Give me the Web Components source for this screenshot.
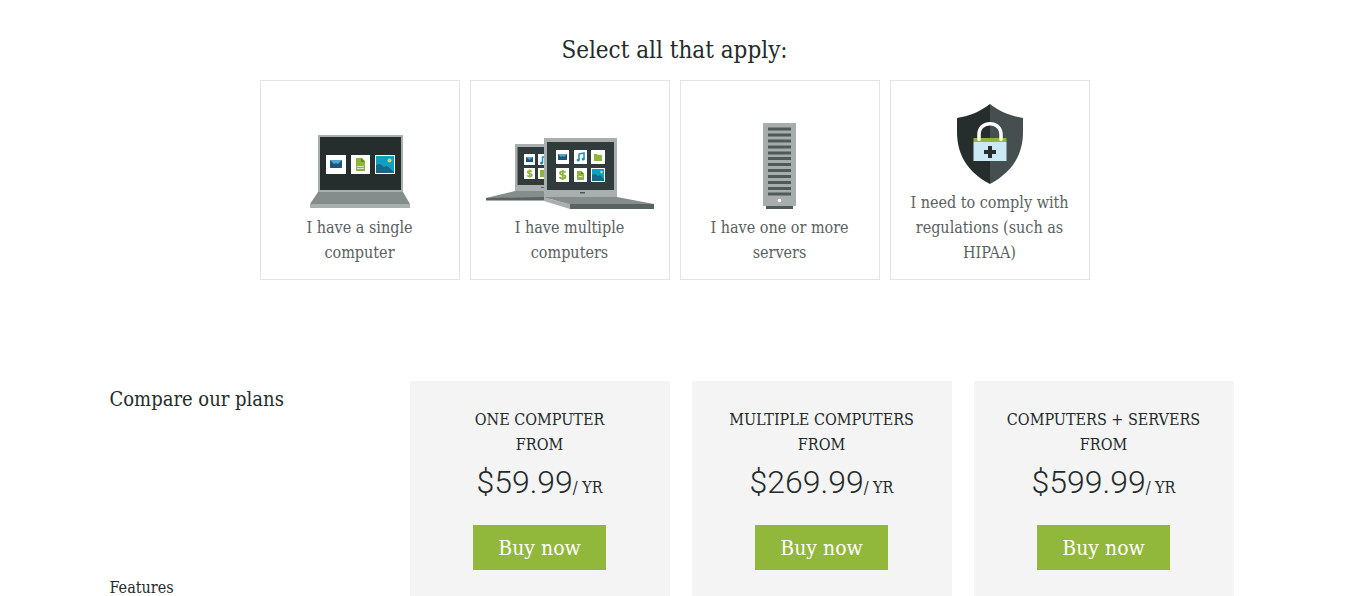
<!DOCTYPE html>
<html lang="en">
<head>
<meta charset="utf-8">
<meta name="viewport" content="width=device-width, initial-scale=1">
<title>Compare our plans</title>
<style>
  body {
    margin: 0;
    background: #fff;
    color: #232b2b;
    font-family: "Roboto Slab", "DejaVu Serif Condensed", "DejaVu Serif", serif;
    font-size: 16px;
    line-height: 25px;
  }
</style>
</head>
<body>
<plans-page></plans-page>

<template id="pic-single">
  <svg viewBox="0 0 100 74" width="100" height="74" aria-hidden="true">
    <path fill="#a9afaf" d="M8 0h85v57H8z"/><path fill="#252d2d" d="M10 2h81v53H10z"/>
    <path fill="#858d8c" d="M8 57h85l7 12H0z"/><path fill="#a9afaf" d="M0 69h100v4H0z"/>
    <path fill="#fff" d="M16 20h20v19H16zM41 20h19v19H41zM65 20h20v19H65z"/>
    <path fill="#1d5776" d="M20 25h12v8H20z"/><path fill="#54a4cf" d="M20 25h12l-4 4-2-1-2 1z"/>
    <path fill="#8fb63a" d="M46 23h6l3 3v10h-9z"/><path fill="#5f8428" d="M51 23l4 4h-4z"/><path stroke="#dbe8b8" d="M47 31.500h7M47 33.500h7"/>
    <path fill="#0f9fc4" d="M66 21h18v17H66z"/><path fill="#176889" d="M66 30l4-1 4 3 3-1 7 6v1H66z"/><circle cx="79.500" cy="25.500" r="2" fill="#c5dc72"/>
  </svg>
</template>

<template id="pic-multiple">
  <svg viewBox="0 0 168 71" width="168" height="71" aria-hidden="true">
    <path fill="#a9afaf" d="M29 6h30v47H29z"/><path fill="#323b3b" d="M31.500 9H58v38H31.500z"/>
    <path fill="#858d8c" d="M29 53h30v8H0v-1z"/><path fill="#596362" d="M0 60l59-1v3.500H0z"/><path fill="#596362" d="M55 49h4v1h-4z"/>
    <path fill="#fff" d="M38 16h11v11H38zM52 16h8v11h-8zM38 30h11v11H38zM52 30h8v11h-8z"/>
    <path fill="#1d5776" d="M40 19h7v5h-7z"/><path fill="#54a4cf" d="M40 19h7l-3.500 3z"/>
    <path fill="none" stroke="#1d8fbd" stroke-width="1.500" d="M56.500 25v-6h3"/><circle cx="55.500" cy="25" r="1.500" fill="#1d8fbd"/>
    <path fill="none" stroke="#8fb63a" stroke-width="1.500" d="M46 33.500c-1-1.300-4.500-1-4.500.7 0 2 4.500.8 4.500 2.800 0 1.800-4 1.800-5 .3M43.700 31.500v8"/>
    <path fill="#8fb63a" d="M54 32h5v7h-5z"/>
    <path fill="#a9afaf" d="M58 0h73v61H58z"/><path fill="#323b3b" d="M61 4h67v48H61z"/>
    <path fill="#4c5655" d="M94 54h5v1.500h-5z"/>
    <path fill="#858d8c" d="M58 59h73l37 7v1H84z"/><path fill="#a9afaf" d="M58 59.500L84 66v5l-26-8z"/><path fill="#596362" d="M84 66h84v5H84z"/>
    <path fill="#fff" d="M70 12h13v14H70zM88 12h13v14H88zM105 12h14v14h-14zM70 30h13v14H70zM88 30h13v14H88zM105 30h14v14h-14z"/>
    <path fill="#1d5776" d="M72 16h9v6h-9z"/><path fill="#54a4cf" d="M72 16h9l-3 3-1.500-1-1.500 1z"/>
    <path fill="none" stroke="#1d8fbd" stroke-width="1.500" d="M93 22v-6l5-1v6"/><circle cx="92.200" cy="22" r="1.600" fill="#1d8fbd"/><circle cx="97.200" cy="21" r="1.600" fill="#1d8fbd"/>
    <path fill="#8fb63a" d="M108 16h3l1 1h4v6h-8z"/>
    <path fill="none" stroke="#8fb63a" stroke-width="1.800" d="M79.500 34.500c-1-1.600-5.500-1.400-5.500.7 0 2.300 5.500 1.200 5.500 3.600 0 2.200-5 2.200-6 .2M76.700 32v10"/>
    <path fill="#8fb63a" d="M91 33h4l3 3v6h-7z"/><path fill="#5f8428" d="M95 33l3 3h-3z"/><path stroke="#dbe8b8" d="M92.500 38.500h4"/>
    <path fill="#0f9fc4" d="M106 31h12v12h-12z"/><path fill="#176889" d="M106 37l3-1 3 2 2-1 4 4v2h-12z"/><circle cx="115.500" cy="34" r="1.300" fill="#c5dc72"/>
  </svg>
</template>

<template id="pic-server">
  <svg viewBox="0 0 33 86" width="33" height="86" aria-hidden="true">
    <path fill="#4f5958" d="M3 82h27v4H3z"/><path fill="#a6adac" d="M0 0h33v83H0z"/>
    <path stroke="#4f5958" stroke-width="3.200" d="M5 6h23M5 12h23M5 18h23M5 24h23M5 30h23M5 35.500h23M5 41.500h23M5 47.500h23M5 53.500h23M5 59.500h23M5 65.500h23M5 71h23"/>
    <circle cx="16.500" cy="77.500" r="1.800" fill="#fff"/>
  </svg>
</template>

<template id="pic-shield">
  <svg viewBox="0 0 66 80" width="66" height="80" aria-hidden="true">
    <path fill="#252d2d" d="M33 0C24 7 13 12 0 14v14c0 26 14 42 33 52z"/>
    <path fill="#454f4f" d="M33 0C42 7 53 12 66 14v14c0 26-14 42-33 52z"/>
    <path fill="#cbe9f5" d="M16.500 38h33v19h-33z"/><path fill="#8fb63a" d="M16.500 34h33v4h-33z"/>
    <path fill="none" stroke="#fff" stroke-width="3.500" stroke-linecap="round" d="M22 35.500v-5c0-14.500 22-14.500 22 0v5"/>
    <path stroke="#252d2d" stroke-width="4" d="M27 48h12M33 42v12"/>
  </svg>
</template>

<template id="tpl-choice">
  <style>
    :host { display: block; width: 200px; }
    label {
      display: flex; flex-direction: column; align-items: center; justify-content: flex-end;
      box-sizing: border-box; min-height: 200px; padding: 14px;
      border: 1px solid #e2e4e4; text-align: center; color: #596161; cursor: pointer;
    }
    label:focus-within { outline: 2px solid #91b83b; }
    input { appearance: none; width: 0; height: 0; margin: 0; }
    svg { display: block; margin-bottom: 6px; }
  </style>
  <label><input type="checkbox"><span class="picture"></span><span><slot></slot></span></label>
</template>

<template id="tpl-plan">
  <style>
    :host { display: block; background: #f4f4f4; text-align: center; padding: 26px 20px; }
    h3 { margin: 0; font: inherit; text-transform: uppercase; }
    p { margin: 0 0 12px; padding-top: 6px; line-height: 50px; }
    .amount { font-family: Roboto, sans-serif; font-weight: 300; font-size: 32px; line-height: 1; }
    button {
      display: block; margin: 0 auto; width: 133px; height: 45px; padding: 0; border: 0;
      background: #91b83b; color: #fff; font-family: inherit; font-size: 21px; cursor: pointer;
    }
  </style>
  <h3><slot></slot><br>From</h3>
  <p><span class="amount"><slot name="price"></slot></span>/ YR</p>
  <button type="button">Buy now</button>
</template>

<template id="tpl-page">
  <style>
    :host { display: block; padding-top: 35px; }
    h1, h2, h3 { margin: 0; font-weight: 400; }
    h1 { font-size: 24px; line-height: 30px; text-align: center; }
    fieldset { margin: 0; padding: 0; border: 0; }
    legend { width: 100%; padding: 0 0 15px; }
    .choices { display: flex; flex-wrap: wrap; justify-content: center; gap: 10px; }
    .compare {
      display: grid; grid-template-columns: 278px repeat(3, 260px); column-gap: 22px;
      box-sizing: border-box; max-width: 1130px; margin: 101px auto 0;
    }
    .labels { display: flex; flex-direction: column; justify-content: space-between; }
    h2 { font-size: 20px; padding-top: 6px; }
    h3 { font-size: 16px; line-height: 16px; }
  </style>
  <main>
    <fieldset>
      <legend><h1>Select all that apply:</h1></legend>
      <div class="choices">
        <choice-card picture="single">I have a single computer</choice-card>
        <choice-card picture="multiple">I have multiple computers</choice-card>
        <choice-card picture="server">I have one or more servers</choice-card>
        <choice-card picture="shield">I need to comply with regulations (such as HIPAA)</choice-card>
      </div>
    </fieldset>
    <section class="compare">
      <div class="labels"><h2>Compare our plans</h2><h3>Features</h3></div>
      <plan-card>One computer<span slot="price">$59.99</span></plan-card>
      <plan-card>Multiple computers<span slot="price">$269.99</span></plan-card>
      <plan-card>Computers + servers<span slot="price">$599.99</span></plan-card>
    </section>
  </main>
</template>

<script>
  const copy = id => document.getElementById(id).content.cloneNode(true);

  class ChoiceCard extends HTMLElement {
    constructor() {
      super();
      this.attachShadow({ mode: "open" }).append(copy("tpl-choice"));
    }
    connectedCallback() {
      this.shadowRoot.querySelector(".picture").replaceChildren(copy("pic-" + this.getAttribute("picture")));
    }
  }

  class PlanCard extends HTMLElement {
    constructor() {
      super();
      this.attachShadow({ mode: "open" }).append(copy("tpl-plan"));
    }
  }

  class PlansPage extends HTMLElement {
    constructor() {
      super();
      this.attachShadow({ mode: "open" }).append(copy("tpl-page"));
    }
  }

  customElements.define("choice-card", ChoiceCard);
  customElements.define("plan-card", PlanCard);
  customElements.define("plans-page", PlansPage);
</script>
</body>
</html>
